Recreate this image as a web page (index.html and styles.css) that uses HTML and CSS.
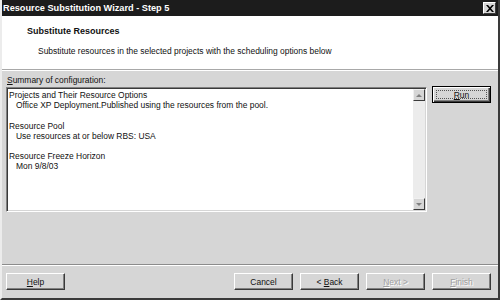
FILE: index.html
```html
<!DOCTYPE html>
<html lang="en">
<head>
  <meta charset="UTF-8">
  <title>Resource Substitution Wizard - Step 5</title>
  <link rel="stylesheet" href="styles.css">
</head>
<body>
  <div class="window">
    <!-- Barra de titulo -->
    <div class="titlebar">
      <span class="titlebar__text">Resource Substitution Wizard - Step 5</span>
      <button class="titlebar__close" aria-label="Close">
        <svg width="8" height="7" viewBox="0 0 8 7">
          <path d="M0 0h2l2 2.3L6 0h2L5 3.5 8 7H6L4 4.7 2 7H0l3-3.5z" fill="#000"></path>
        </svg>
      </button>
    </div>

    <!-- Cabecera blanca del asistente -->
    <header class="wiz-header">
      <h1 class="wiz-header__title">Substitute Resources</h1>
      <p class="wiz-header__sub">Substitute resources in the selected projects with the scheduling options below</p>
    </header>

    <main class="wiz-body">
      <label class="wiz-body__label"><u>S</u>ummary of configuration:</label>
      <div class="wiz-body__row">
        <div class="listbox">
          <div class="listbox__text">
            <div>Projects and Their Resource Options</div>
            <div class="indent">Office XP Deployment.Published using the resources from the pool.</div>
            <div>&nbsp;</div>
            <div>Resource Pool</div>
            <div class="indent">Use resources at or below RBS: USA</div>
            <div>&nbsp;</div>
            <div>Resource Freeze Horizon</div>
            <div class="indent">Mon 9/8/03</div>
          </div>
          <div class="scrollbar">
            <span class="scrollbar__btn"><span class="tri tri--up"></span></span>
            <span class="scrollbar__track"></span>
            <span class="scrollbar__btn"><span class="tri tri--down"></span></span>
          </div>
        </div>
        <button class="btn btn--default"><span class="btn__focus"><u>R</u>un</span></button>
      </div>
    </main>

    <footer class="wiz-footer">
      <button class="btn"><u>H</u>elp</button>
      <div class="wiz-footer__right">
        <button class="btn">Cancel</button>
        <button class="btn">&lt; <u>B</u>ack</button>
        <button class="btn btn--disabled"><u>N</u>ext &gt;</button>
        <button class="btn btn--disabled"><u>F</u>inish</button>
      </div>
    </footer>
  </div>
</body>
</html>
```

FILE: styles.css
```css
:root {
  --face: #d6d6d6;
  --shadow: #808080;
  --dark: #3a3a3a;
}
body {
  margin: 0;
  font-family: "Liberation Sans", Arial, sans-serif;
  font-size: 8.45px;
  color: #111;
  background: var(--face);
}
.window {
  width: 500px;
  height: 300px;
  box-sizing: border-box;
  border-left: 2px solid #ececec;
  border-right: 2px solid var(--dark);
  border-bottom: 2px solid var(--dark);
  display: flex;
  flex-direction: column;
  background: var(--face);
}
/* Barra de titulo */
.titlebar {
  height: 16px;
  background: #1c1c1c;
  display: flex;
  align-items: center;
  justify-content: space-between;
  padding: 0 2px 0 1px;
}
.titlebar__text {
  color: #fff;
  font-weight: 700;
  font-size: 9.2px;
}
.titlebar__close {
  width: 13px;
  height: 12px;
  padding: 0;
  border: 1px solid;
  border-color: #fff var(--dark) var(--dark) #fff;
  background: var(--face);
  display: flex;
  align-items: center;
  justify-content: center;
}
/* Cabecera */
.wiz-header {
  height: 54px;
  box-sizing: border-box;
  background: #fff;
  padding: 10px 0 0 25px;
  border-bottom: 1px solid #a8a8a8;
}
.wiz-header__title {
  margin: 0;
  font-size: 9px;
  line-height: 11px;
  font-weight: 700;
}
.wiz-header__sub {
  margin: 9px 0 0 11px;
  line-height: 10px;
}
/* Cuerpo */
.wiz-body {
  flex: 1;
  padding: 5px 7px 0 4px;
  box-shadow: inset 0 1px 0 #fff;
}
.wiz-body__label {
  display: block;
  line-height: 10px;
  margin-left: 1px;
  margin-bottom: 2px;
}
.wiz-body__row {
  display: flex;
  gap: 5px;
  align-items: flex-start;
}
.listbox {
  width: 421px;
  height: 125px;
  box-sizing: border-box;
  border: 1px solid;
  border-color: var(--shadow) #fff #fff var(--shadow);
  box-shadow: inset 1px 1px 0 var(--dark), inset -1px -1px 0 var(--face);
  background: #fff;
  display: flex;
  padding: 1px;
}
.listbox__text {
  flex: 1;
  padding: 1px 0 0 1px;
  line-height: 10.2px;
  white-space: nowrap;
  overflow: hidden;
}
.indent {
  padding-left: 7px;
}
.scrollbar {
  width: 12px;
  display: flex;
  flex-direction: column;
}
.scrollbar__track {
  flex: 1;
  background: #ececec;
}
.scrollbar__btn {
  height: 12px;
  box-sizing: border-box;
  border: 1px solid;
  border-color: #f0f0f0 var(--dark) var(--dark) #f0f0f0;
  background: var(--face);
  display: flex;
  align-items: center;
  justify-content: center;
}
.tri {
  width: 0;
  height: 0;
  border-left: 3px solid transparent;
  border-right: 3px solid transparent;
}
.tri--up {
  border-bottom: 3px solid var(--shadow);
}
.tri--down {
  border-top: 3px solid var(--shadow);
}
/* Botones */
.btn {
  width: 59px;
  height: 17px;
  box-sizing: border-box;
  padding: 0;
  font: inherit;
  color: #111;
  background: var(--face);
  border: 1px solid;
  border-color: #fff var(--dark) var(--dark) #fff;
  box-shadow: inset -1px -1px 0 var(--shadow);
}
.btn--default {
  margin-top: -1px;
  border: 1px solid #000;
  box-shadow: inset 1px 1px 0 #fff, inset -1px -1px 0 var(--dark), inset -2px -2px 0 var(--shadow);
  display: flex;
  padding: 3px;
}
.btn__focus {
  flex: 1;
  border: 1px dotted #555;
  display: flex;
  align-items: center;
  justify-content: center;
}
.btn--disabled {
  color: #a0a0a0;
  text-shadow: 1px 1px 0 #fff;
}
/* Pie */
.wiz-footer {
  border-top: 1px solid #8c8c8c;
  box-shadow: inset 0 1px 0 #fff;
  padding: 8px 7px 8px 4px;
  display: flex;
  justify-content: space-between;
}
.wiz-footer__right {
  display: flex;
  gap: 7px;
}
```
